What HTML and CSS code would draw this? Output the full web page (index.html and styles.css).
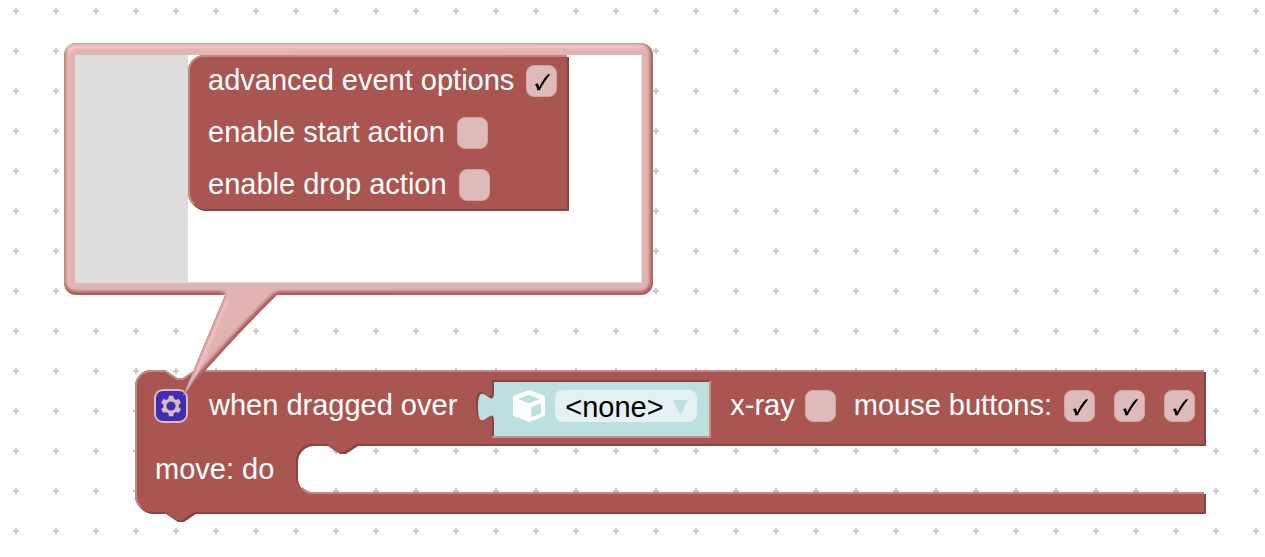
FILE: index.html
```html
<!DOCTYPE html>
<html lang="en">
<head>
    <meta charset="UTF-8">
    <meta name="viewport" content="width=device-width, initial-scale=1.0">
    <title>Block editor</title>
    <link rel="stylesheet" href="styles.css">
</head>
<body>
    <main class="workspace">
        <svg class="grid" aria-hidden="true">
            <defs>
                <pattern id="gridPattern" width="40" height="40" patternUnits="userSpaceOnUse">
                    <path d="M13,11 h6 M16,8 v6" stroke="#c8c8c8" stroke-width="2"/>
                </pattern>
            </defs>
            <rect width="100%" height="100%" fill="url(#gridPattern)"/>
        </svg>

        <!-- event block -->
        <section class="block event-block">
            <svg class="block-shape" width="1072" height="154" aria-hidden="true">
                <path class="shape-dark" transform="translate(2,2)" d="M0,16 A16,16 0 0 1 16,0 H30 l12,8 6,0 12,-8 H1069 V74 H221 l-12,8 -6,0 -12,-8 H177 a16,16 0 0 0 -16,16 V106 a16,16 0 0 0 16,16 H1069 V142 H59 l-12,8 -6,0 -12,-8 H16 a16,16 0 0 1 -16,-16 z"/>
                <path class="shape-fill" d="M0,16 A16,16 0 0 1 16,0 H30 l12,8 6,0 12,-8 H1069 V74 H221 l-12,8 -6,0 -12,-8 H177 a16,16 0 0 0 -16,16 V106 a16,16 0 0 0 16,16 H1069 V142 H59 l-12,8 -6,0 -12,-8 H16 a16,16 0 0 1 -16,-16 z"/>
                <path class="shape-light" d="M6,137 A15,15 0 0 1 1,126 V16 A15,15 0 0 1 16,1 H30 l12,8 6,0 12,-8 H1069 M167,118 a16,16 0 0 0 10,5 H1069"/>
            </svg>
            <div class="row event-row">
                <button class="gear" type="button" aria-label="Block options">
                    <svg width="34" height="34" viewBox="-0.5 -0.5 17 17">
                        <rect class="gear-box" width="16" height="16" rx="4"/>
                        <path class="gear-symbol" d="m4.203,7.296 0,1.368 -0.92,0.677 -0.11,0.41 0.9,1.559 0.41,0.11 1.043,-0.457 1.187,0.683 0.127,1.134 0.3,0.3 1.8,0 0.3,-0.299 0.127,-1.138 1.185,-0.682 1.046,0.458 0.409,-0.11 0.9,-1.559 -0.11,-0.41 -0.92,-0.677 0,-1.366 0.92,-0.677 0.11,-0.41 -0.9,-1.559 -0.409,-0.109 -1.046,0.458 -1.185,-0.682 -0.127,-1.138 -0.3,-0.299 -1.8,0 -0.3,0.3 -0.126,1.135 -1.187,0.682 -1.043,-0.457 -0.41,0.11 -0.899,1.559 0.108,0.409z"/>
                        <circle class="gear-hole" cx="8" cy="8" r="2.3"/>
                    </svg>
                </button>
                <span class="event-name">when dragged over</span>
                <div class="value-block">
                    <svg class="value-shape" width="236" height="60" aria-hidden="true">
                        <path class="shape-dark" d="M16,0 V10 c0,20 -16,-16 -16,15 s16,-3 16,15 V58 H234 V0 z"/>
                        <path class="value-light" d="M234,1 V57 H16"/>
                        <path class="value-fill" d="M18,2 V12 c0,20 -16,-16 -16,15 s16,-5 16,15 V56 H233 V2 z"/>
                    </svg>
                    <svg class="cube" width="32" height="32" viewBox="0 0 32 32" aria-hidden="true">
                        <path fill="#fff" fill-rule="evenodd" d="M14.500,0.600 Q16,0 17.500,0.600 L30.500,5.400 Q32,6 32,7.500 V24 Q32,25.500 30.500,26.200 L17.500,31.500 Q16,32 14.500,31.500 L1.500,26.200 Q0,25.500 0,24 V7.500 Q0,6 1.500,5.400 z M16,4.700 L4.700,9 L16,13.300 L27.300,9 z M18.200,17.300 V27.300 L28,23.200 V13.300 z"/>
                    </svg>
                    <div class="dropdown">
                        <select aria-label="Object">
                            <option>&lt;none&gt;</option>
                        </select>
                        <svg class="dropdown-arrow" width="15" height="15" viewBox="0 0 15 15" aria-hidden="true"><path d="M0,0 H15 L7.500,15 z"/></svg>
                    </div>
                </div>
                <label class="field xray">x-ray <input type="checkbox"></label>
                <div class="buttons">
                    <label class="field">mouse buttons: <input type="checkbox" checked></label>
                    <input type="checkbox" aria-label="Middle button" checked>
                    <input type="checkbox" aria-label="Right button" checked>
                </div>
            </div>
            <div class="row statement-row">move: do</div>
        </section>

        <!-- mutator bubble -->
        <section class="bubble">
            <svg class="bubble-shape" width="590" height="354" aria-hidden="true">
                <defs>
                    <filter id="emboss" x="-10%" y="-10%" width="120%" height="120%">
                        <feGaussianBlur in="SourceAlpha" stdDeviation="1.4" result="blur"/>
                        <feSpecularLighting in="blur" surfaceScale="1" specularConstant="0.5" specularExponent="10" lighting-color="white" result="specOut">
                            <fePointLight x="-5000" y="-10000" z="20000"/>
                        </feSpecularLighting>
                        <feComposite in="specOut" in2="SourceAlpha" operator="in" result="specOut"/>
                        <feComposite in="SourceGraphic" in2="specOut" operator="arithmetic" k1="0" k2="1" k3="1" k4="0"/>
                    </filter>
                </defs>
                <g transform="scale(2)">
                    <g class="bubble-fill" filter="url(#emboss)">
                        <path d="M84,118 L80.500,126 Q67,158 59.500,176.500 Q84,148 107,125.500 L114,118 z"/>
                        <rect width="294.500" height="126" rx="6"/>
                    </g>
                </g>
            </svg>
            <div class="mini-workspace">
                <div class="flyout"></div>
                <div class="block options-block">
                    <svg class="block-shape" width="383" height="157" aria-hidden="true">
                        <path class="shape-dark" transform="translate(2,2)" d="M0,16 A16,16 0 0 1 16,0 H379 V154 H16 A16,16 0 0 1 0,138 z"/>
                        <path class="shape-fill" d="M0,16 A16,16 0 0 1 16,0 H379 V154 H16 A16,16 0 0 1 0,138 z"/>
                        <path class="shape-light" d="M6,149 A15,15 0 0 1 1,138 V16 A15,15 0 0 1 16,1 H379"/>
                    </svg>
                    <label class="field">advanced event options <input type="checkbox" checked></label>
                    <label class="field">enable start action <input type="checkbox"></label>
                    <label class="field">enable drop action <input type="checkbox"></label>
                </div>
            </div>
        </section>
    </main>
</body>
</html>
```

FILE: styles.css
```css
* {
    margin: 0;
    padding: 0;
    box-sizing: border-box;
}

body {
    font-family: "Liberation Sans", Arial, sans-serif;
    font-size: 29px;
    line-height: 30px;
    background: #fff;
}

.workspace {
    position: relative;
    min-height: 100vh;
    overflow: hidden;
}

.grid {
    position: absolute;
    inset: 0;
    width: 100%;
    height: 100%;
}

/* blocks */
.block {
    color: #fff;
    white-space: nowrap;
}

.block-shape {
    position: absolute;
    top: 0;
    left: 0;
    z-index: -1;
}

.shape-fill {
    fill: #a95652;
}

.shape-dark {
    fill: #874542;
}

.shape-light {
    fill: none;
    stroke: #c38986;
    stroke-width: 2;
}

.event-block {
    position: absolute;
    z-index: 1;
    left: 135px;
    top: 370px;
}

.row {
    display: flex;
    align-items: center;
    padding-left: 19px;
}

.event-row {
    height: 72px;
}

.statement-row {
    height: 54px;
    padding-left: 20px;
}

.event-name {
    margin-left: 21px;
    margin-right: 19px;
    padding-bottom: 2px;
}

.field {
    display: flex;
    align-items: flex-start;
    gap: 12px;
}

.xray {
    gap: 10px;
    margin-left: 19px;
    margin-right: 18px;
}

.buttons {
    display: flex;
    gap: 19px;
}

input[type="checkbox"] {
    appearance: none;
    width: 31px;
    height: 32px;
    border: 1px solid #cfa5a4;
    border-radius: 8px;
    background: #ddbbba;
    cursor: pointer;
}

input[type="checkbox"]:checked {
    background-image: url("data:image/svg+xml,%3Csvg xmlns='http://www.w3.org/2000/svg' viewBox='1 1 29 30'%3E%3Cpath d='M9,19.5 Q10.500,18 12,18.500 L13.200,22.300 C15.500,17.500 19,12 22,9.300 H24.300 C20,14.500 16.500,20 13.700,25.200 H11.400 Q10.800,21.500 9,19.500z'/%3E%3C/svg%3E");
    background-size: 100% 100%;
}

.gear {
    display: block;
    width: 34px;
    height: 34px;
    border: none;
    background: none;
    cursor: pointer;
}

.gear svg {
    display: block;
}

.gear-box {
    fill: #3f2db3;
    stroke: #ddbbba;
    stroke-width: 1;
}

.gear-symbol {
    fill: #ddbbba;
}

.gear-hole {
    fill: #3f2db3;
}

/* value input */
.value-block {
    position: relative;
    display: flex;
    align-items: center;
    gap: 10px;
    height: 52px;
    padding-left: 37px;
    padding-right: 14px;
}

.value-shape {
    position: absolute;
    top: 0;
    left: 0;
    z-index: -1;
}

.value-fill {
    fill: #bddfe0;
}

.value-light {
    fill: none;
    stroke: #c78e8c;
    stroke-width: 2;
}

.dropdown {
    position: relative;
}

.dropdown select {
    appearance: none;
    display: block;
    width: 142px;
    height: 32px;
    padding-top: 2px;
    padding-left: 10px;
    border: none;
    border-radius: 8px;
    background: #e4f1f2;
    color: #000;
    font: inherit;
    cursor: pointer;
}

.dropdown-arrow {
    position: absolute;
    right: 9px;
    top: 10px;
    fill: #bddfe0;
    pointer-events: none;
}

/* bubble */
.bubble {
    position: absolute;
    z-index: 2;
    left: 64px;
    top: 43px;
    padding: 12px 11px;
}

.bubble-shape {
    position: absolute;
    top: 0;
    left: 0;
    overflow: visible;
    pointer-events: none;
}

.bubble-fill {
    fill: #a95652;
}

.mini-workspace {
    position: relative;
    display: flex;
    align-items: flex-start;
    width: 567px;
    height: 228px;
    background: #fff;
    border: 1px solid #ddd;
    border-top: none;
    border-left: none;
}

.flyout {
    align-self: stretch;
    width: 113px;
    background: #ddd;
}

.options-block {
    position: relative;
    z-index: 1;
    display: flex;
    flex-direction: column;
    align-items: flex-start;
    gap: 20px;
    padding: 10px 12px 16px 20px;
}
```
